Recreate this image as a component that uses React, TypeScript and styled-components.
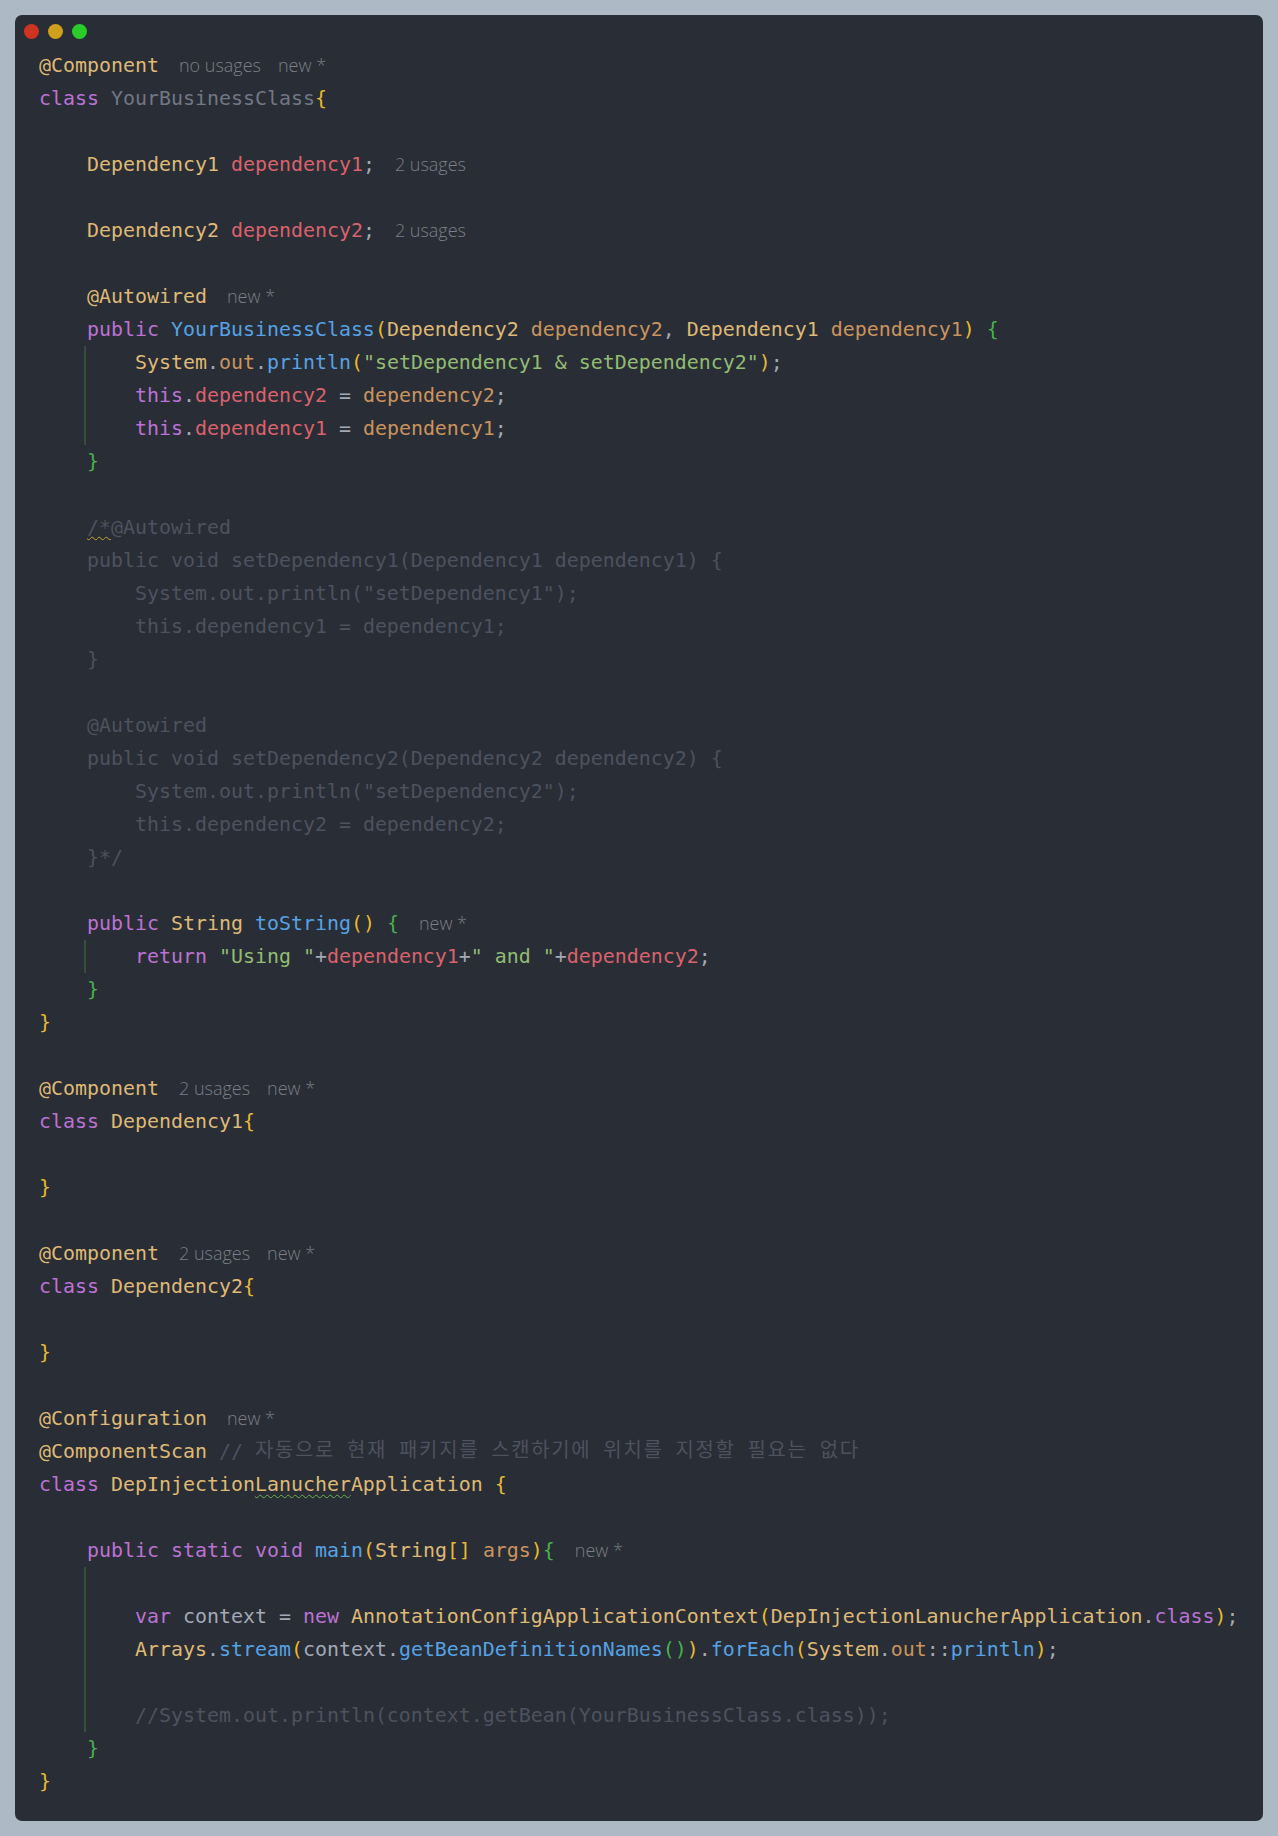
import { Fragment, ReactNode } from "react"
import styled, { createGlobalStyle } from "styled-components"

type Kind = 'plain' | 'keyword' | 'type' | 'field' | 'param' | 'fn' | 'str' | 'comment' | 'unused' | 'brace' | 'greenBrace'

const colors: Record<Kind, string> = {
  plain: '#a3a9b5',
  keyword: '#bc72d4',
  type: '#dfb976',
  field: '#d9626d',
  param: '#cb945e',
  fn: '#56a2e4',
  str: '#92bc73',
  comment: '#4d525f',
  unused: '#727784',
  brace: '#e6ba34',
  greenBrace: '#4caf50',
}

const GlobalStyle = createGlobalStyle`
  html, body {
    margin: 0;
    padding: 0;
    background: #adb9c5;
  }
`
const Page = styled.main`
  padding: 15px;
  min-height: 1836px;
  box-sizing: border-box;
`
const Window = styled.section`
  height: 1806px;
  box-sizing: border-box;
  background: #292d35;
  border-radius: 7px;
  overflow: hidden;
`
const TitleBar = styled.div`
  display: flex;
  gap: 9px;
  padding: 9px 0 0 9px;
  height: 33.5px;
  box-sizing: border-box;
`
const Dot = styled.span<{ $color: string }>`
  width: 15px;
  height: 15px;
  border-radius: 50%;
  background: ${(p) => p.$color};
`
const Code = styled.div`
  padding-left: 24px;
  font-family: "DejaVu Sans Mono", "Noto Sans CJK KR", monospace;
  font-size: 19.93px;
  line-height: 33px;
  color: ${colors.plain};
`
const Line = styled.div<{ $indent: number }>`
  height: 33px;
  padding-left: ${(p) => p.$indent * 12}px;
  white-space: pre;
`
const Guide = styled.div`
  margin-left: 45px;
  padding-left: 49px;
  border-left: 2px solid #34503c;
`
const Token = styled.span<{ $kind: Kind }>`
  color: ${(p) => colors[p.$kind]};
`
const Hangul = styled.span`
  font-family: "Noto Sans CJK KR", sans-serif;
  color: ${colors.comment};
  letter-spacing: 1.7px;
  line-height: 1;
  vertical-align: 1px;
`
const Hint = styled.span`
  margin-left: 20px;
  font-family: "Open Sans", sans-serif;
  font-weight: 300;
  font-size: 18px;
  color: #7b7f87;
  & + & {
    margin-left: 17px;
  }
`
const Squiggle = styled.span<{ $color: string; $offset: number }>`
  text-decoration: underline wavy ${(p) => p.$color} 1px;
  text-underline-offset: ${(p) => p.$offset}px;
`

const k = (text: string) => <Token $kind="keyword">{text}</Token>
const t = (text: string) => <Token $kind="type">{text}</Token>
const f = (text: string) => <Token $kind="field">{text}</Token>
const a = (text: string) => <Token $kind="param">{text}</Token>
const m = (text: string) => <Token $kind="fn">{text}</Token>
const s = (text: string) => <Token $kind="str">{text}</Token>
const c = (text: string) => <Token $kind="comment">{text}</Token>
const b = (text: string) => <Token $kind="brace">{text}</Token>
const g = (text: string) => <Token $kind="greenBrace">{text}</Token>
const h = (text: string) => <Hint>{text}</Hint>

function Row({ indent = 0, children }: { indent?: number; children?: ReactNode }) {
  return <Line $indent={indent}>{children}</Line>
}

function Parts(...parts: ReactNode[]) {
  return parts.map((part, i) => <Fragment key={i}>{part}</Fragment>)
}

export default function App() {
  return (
    <Page>
      <GlobalStyle />
      <Window>
        <TitleBar>
          <Dot $color="#cf3423" />
          <Dot $color="#cfa01c" />
          <Dot $color="#2acc2a" />
        </TitleBar>
        <Code>
          <Row>{Parts(t('@Component'), h('no usages'), h('new *'))}</Row>
          <Row>{Parts(k('class'), ' ', <Token $kind="unused">YourBusinessClass</Token>, b('{'))}</Row>
          <Row />
          <Row indent={4}>{Parts(t('Dependency1'), ' ', f('dependency1'), ';', h('2 usages'))}</Row>
          <Row />
          <Row indent={4}>{Parts(t('Dependency2'), ' ', f('dependency2'), ';', h('2 usages'))}</Row>
          <Row />
          <Row indent={4}>{Parts(t('@Autowired'), h('new *'))}</Row>
          <Row indent={4}>
            {Parts(k('public'), ' ', m('YourBusinessClass'), b('('), t('Dependency2'), ' ', a('dependency2'), ', ', t('Dependency1'), ' ', a('dependency1'), b(')'), ' ', g('{'))}
          </Row>
          <Guide>
            <Row>{Parts(t('System'), '.', a('out'), '.', m('println'), b('('), s('"setDependency1 & setDependency2"'), b(')'), ';')}</Row>
            <Row>{Parts(k('this'), '.', f('dependency2'), ' = ', a('dependency2'), ';')}</Row>
            <Row>{Parts(k('this'), '.', f('dependency1'), ' = ', a('dependency1'), ';')}</Row>
          </Guide>
          <Row indent={4}>{g('}')}</Row>
          <Row />
          <Row indent={4}>{Parts(<Squiggle $color="#c9a23a" $offset={2}>{c('/*')}</Squiggle>, c('@Autowired'))}</Row>
          <Row indent={4}>{c('public void setDependency1(Dependency1 dependency1) {')}</Row>
          <Row indent={8}>{c('System.out.println("setDependency1");')}</Row>
          <Row indent={8}>{c('this.dependency1 = dependency1;')}</Row>
          <Row indent={4}>{c('}')}</Row>
          <Row />
          <Row indent={4}>{c('@Autowired')}</Row>
          <Row indent={4}>{c('public void setDependency2(Dependency2 dependency2) {')}</Row>
          <Row indent={8}>{c('System.out.println("setDependency2");')}</Row>
          <Row indent={8}>{c('this.dependency2 = dependency2;')}</Row>
          <Row indent={4}>{c('}*/')}</Row>
          <Row />
          <Row indent={4}>{Parts(k('public'), ' ', t('String'), ' ', m('toString'), b('()'), ' ', g('{'), h('new *'))}</Row>
          <Guide>
            <Row>{Parts(k('return'), ' ', s('"Using "'), '+', f('dependency1'), '+', s('" and "'), '+', f('dependency2'), ';')}</Row>
          </Guide>
          <Row indent={4}>{g('}')}</Row>
          <Row>{b('}')}</Row>
          <Row />
          <Row>{Parts(t('@Component'), h('2 usages'), h('new *'))}</Row>
          <Row>{Parts(k('class'), ' ', t('Dependency1'), b('{'))}</Row>
          <Row />
          <Row>{b('}')}</Row>
          <Row />
          <Row>{Parts(t('@Component'), h('2 usages'), h('new *'))}</Row>
          <Row>{Parts(k('class'), ' ', t('Dependency2'), b('{'))}</Row>
          <Row />
          <Row>{b('}')}</Row>
          <Row />
          <Row>{Parts(t('@Configuration'), h('new *'))}</Row>
          <Row>
            {Parts(t('@ComponentScan'), ' ', c('// '), <Hangul>자동으로</Hangul>, c(' '), <Hangul>현재</Hangul>, c(' '), <Hangul>패키지를</Hangul>, c(' '), <Hangul>스캔하기에</Hangul>, c(' '), <Hangul>위치를</Hangul>, c(' '), <Hangul>지정할</Hangul>, c(' '), <Hangul>필요는</Hangul>, c(' '), <Hangul>없다</Hangul>)}
          </Row>
          <Row>
            {Parts(k('class'), ' ', t('DepInjection'), <Squiggle $color="#6fae50" $offset={3}>{t('Lanucher')}</Squiggle>, t('Application'), ' ', b('{'))}
          </Row>
          <Row />
          <Row indent={4}>
            {Parts(k('public'), ' ', k('static'), ' ', k('void'), ' ', m('main'), b('('), t('String'), b('[]'), ' ', a('args'), b(')'), g('{'), h('new *'))}
          </Row>
          <Guide>
            <Row />
            <Row>
              {Parts(k('var'), ' context = ', k('new'), ' ', t('AnnotationConfigApplicationContext'), b('('), t('DepInjectionLanucherApplication'), '.', k('class'), b(')'), ';')}
            </Row>
            <Row>
              {Parts(t('Arrays'), '.', m('stream'), b('('), 'context.', m('getBeanDefinitionNames'), g('()'), b(')'), '.', m('forEach'), b('('), t('System'), '.', a('out'), '::', m('println'), b(')'), ';')}
            </Row>
            <Row />
            <Row>{c('//System.out.println(context.getBean(YourBusinessClass.class));')}</Row>
          </Guide>
          <Row indent={4}>{g('}')}</Row>
          <Row>{b('}')}</Row>
        </Code>
      </Window>
    </Page>
  )
}
